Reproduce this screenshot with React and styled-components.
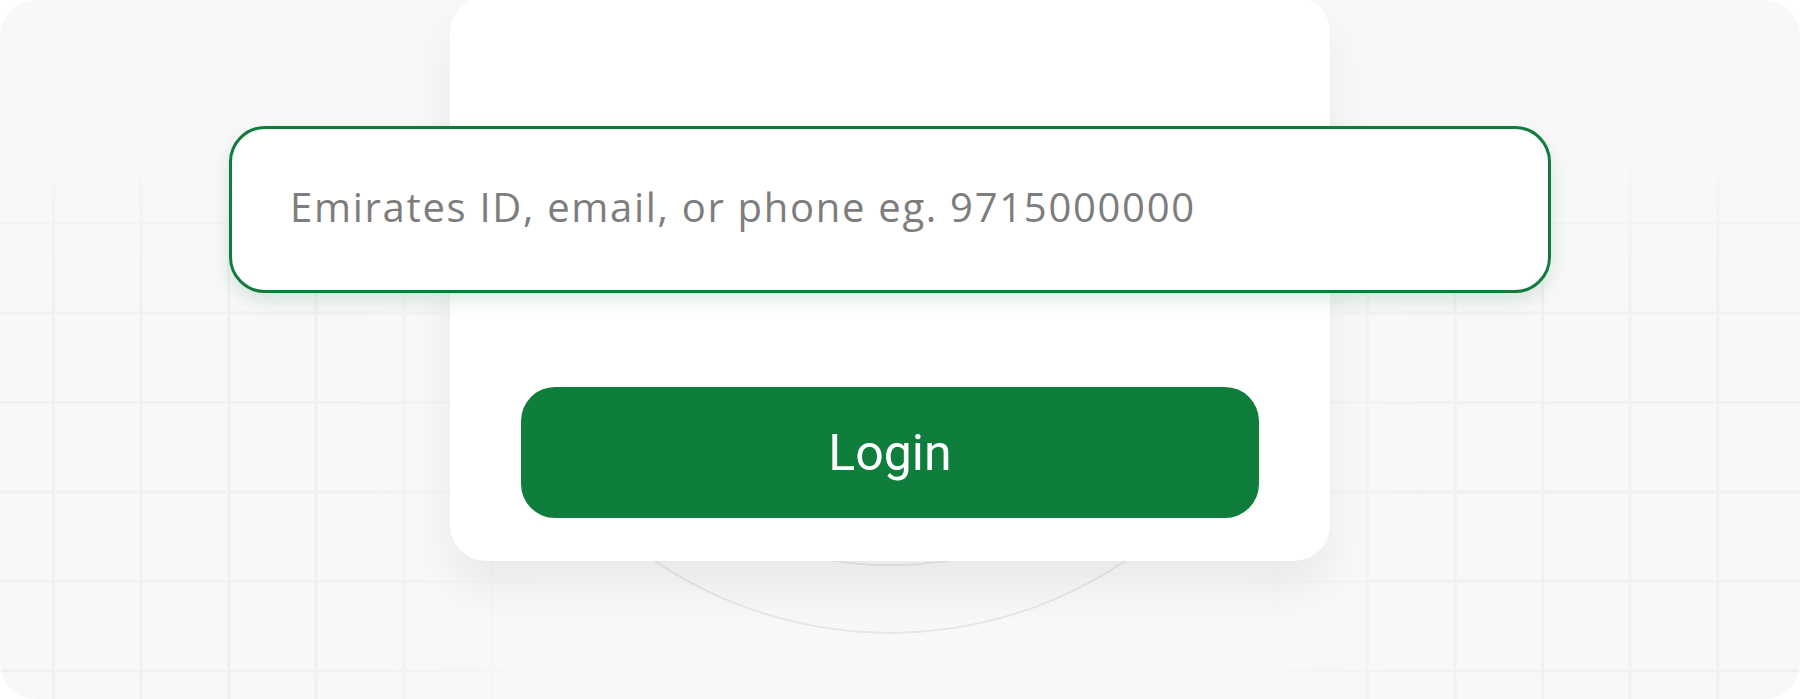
import React from "react";
import styled, { createGlobalStyle } from "styled-components";

const GlobalStyle = createGlobalStyle`
  html, body {
    margin: 0;
    padding: 0;
    background: #ffffff;
  }
  * {
    box-sizing: border-box;
  }
`;

const Page = styled.div`
  position: relative;
  width: 1800px;
  height: 699px;
  border-radius: 36px;
  background: #f8f8f8;
  overflow: hidden;
  display: flex;
  justify-content: center;
  align-items: flex-start;
  padding-right: 20px;

  /* grid lines, faded towards the top and the middle */
  &::before {
    content: "";
    position: absolute;
    inset: 0;
    background-image:
      linear-gradient(to right, #f0f0f0 0 3px, transparent 3px),
      linear-gradient(to bottom, #f0f0f0 0 3px, transparent 3px);
    background-size: 87.6px 89.5px;
    background-position: 52px 222px;
    -webkit-mask-image:
      linear-gradient(to bottom, transparent 150px, #000 260px),
      linear-gradient(to right, #000 360px, transparent 540px, transparent 1250px, #000 1420px);
    -webkit-mask-composite: source-in;
    mask-image:
      linear-gradient(to bottom, transparent 150px, #000 260px),
      linear-gradient(to right, #000 360px, transparent 540px, transparent 1250px, #000 1420px);
    mask-composite: intersect;
  }

  /* rings behind the card */
  &::after {
    content: "";
    position: absolute;
    inset: 0;
    background: radial-gradient(
      circle at 890px 212px,
      #f8f8f8 0 352px,
      #e7e7e7 352.5px 354px,
      #f7f7f7 354.5px 419.5px,
      #e7e7e7 420px 421.5px,
      transparent 422px
    );
  }
`;

const Card = styled.div`
  position: relative;
  z-index: 1;
  width: 880px;
  height: 565px;
  margin-top: -4px;
  padding: 130px 71px 43px;
  background: #ffffff;
  border-radius: 36px;
  box-shadow: 0 26px 44px rgba(0, 0, 0, 0.06);
  display: flex;
  flex-direction: column;
  align-items: center;
  gap: 94px;
`;

const Field = styled.input`
  flex: none;
  width: 1322px;
  height: 167px;
  padding: 0 58px 6px;
  border: 3px solid #117b3c;
  border-radius: 36px;
  background: #ffffff;
  box-shadow: 0 8px 18px rgba(17, 123, 60, 0.14);
  font-family: "Open Sans", Lato, sans-serif;
  font-size: 40px;
  letter-spacing: 1.7px;
  color: #333333;
  outline: none;

  &::placeholder {
    color: #7d7d7d;
  }
`;

const LoginButton = styled.button`
  flex: none;
  width: 100%;
  height: 131px;
  border: none;
  border-radius: 34px;
  background: #0f7e3c;
  color: #ffffff;
  font-family: Roboto, "Liberation Sans", sans-serif;
  font-size: 50px;
  font-weight: 400;
  cursor: pointer;
`;

const App = () => {
  return (
    <>
      <GlobalStyle />
      <Page>
        <Card>
          <Field placeholder="Emirates ID, email, or phone eg. 9715000000" />
          <LoginButton>Login</LoginButton>
        </Card>
      </Page>
    </>
  );
};

export default App;
